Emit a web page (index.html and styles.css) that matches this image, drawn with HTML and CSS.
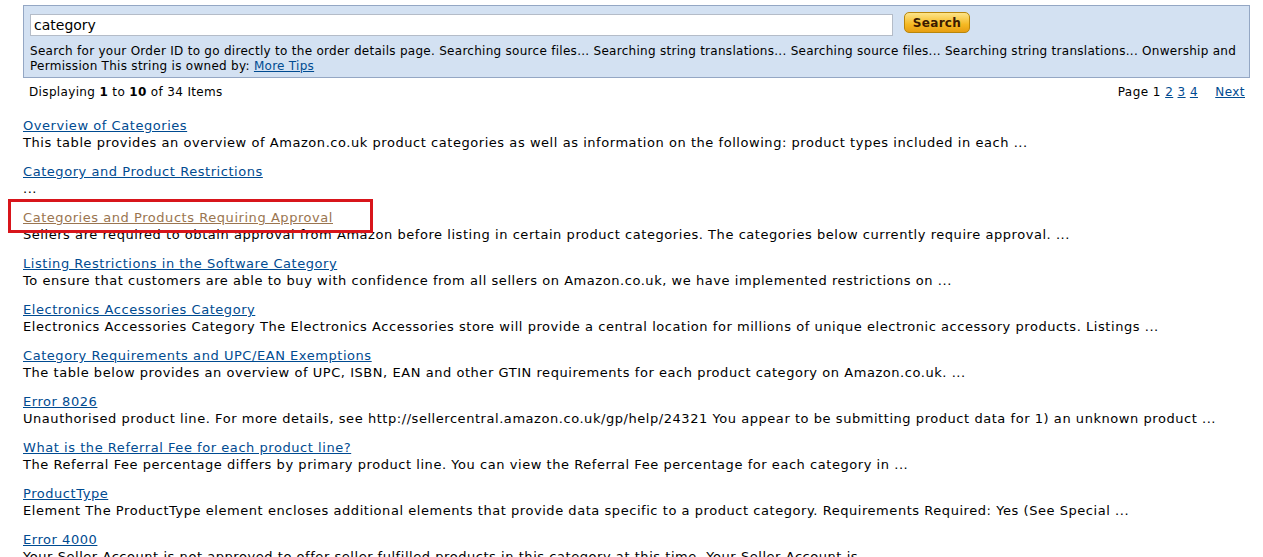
FILE: index.html
```html
<!DOCTYPE html>
<html lang="en">
<head>
<meta charset="UTF-8">
<title>Seller Help - Search Results</title>
<link rel="stylesheet" href="styles.css">
</head>
<body>
<div class="page">
    <div class="search-box">
        <form class="search-row">
            <input type="text" class="search-input" value="category">
            <button type="button" class="search-btn">Search</button>
        </form>
        <div class="search-tips">Search for your Order ID to go directly to the order details page. Searching source files... Searching string translations... Searching source files... Searching string translations... Onwership and Permission This string is owned by: <a href="#">More Tips</a></div>
    </div>

    <div class="result-bar">
        <span>Displaying <b>1</b> to <b>10</b> of 34 Items</span>
        <span class="pager">Page 1 <a href="#">2</a> <a href="#">3</a> <a href="#">4</a> <a href="#" class="next">Next</a></span>
    </div>

    <ul class="results">
        <li><a href="#">Overview of Categories</a><div>This table provides an overview of Amazon.co.uk product categories as well as information on the following: product types included in each ...</div></li>
        <li><a href="#">Category and Product Restrictions</a><div>...</div></li>
        <li class="marked"><a href="#" class="visited">Categories and Products Requiring Approval</a><div>Sellers are required to obtain approval from Amazon before listing in certain product categories. The categories below currently require approval. ...</div></li>
        <li><a href="#">Listing Restrictions in the Software Category</a><div>To ensure that customers are able to buy with confidence from all sellers on Amazon.co.uk, we have implemented restrictions on ...</div></li>
        <li><a href="#">Electronics Accessories Category</a><div>Electronics Accessories Category The Electronics Accessories store will provide a central location for millions of unique electronic accessory products. Listings ...</div></li>
        <li><a href="#">Category Requirements and UPC/EAN Exemptions</a><div>The table below provides an overview of UPC, ISBN, EAN and other GTIN requirements for each product category on Amazon.co.uk. ...</div></li>
        <li><a href="#">Error 8026</a><div>Unauthorised product line. For more details, see http://sellercentral.amazon.co.uk/gp/help/24321 You appear to be submitting product data for 1) an unknown product ...</div></li>
        <li><a href="#">What is the Referral Fee for each product line?</a><div>The Referral Fee percentage differs by primary product line. You can view the Referral Fee percentage for each category in ...</div></li>
        <li><a href="#">ProductType</a><div>Element The ProductType element encloses additional elements that provide data specific to a product category. Requirements Required: Yes (See Special ...</div></li>
        <li><a href="#">Error 4000</a><div>Your Seller Account is not approved to offer seller-fulfilled products in this category at this time. Your Seller Account is ...</div></li>
    </ul>
</div>
</body>
</html>
```

FILE: styles.css
```css
body {
    margin: 0;
    font-family: "DejaVu Sans", Verdana, sans-serif;
    font-size: 13px;
    letter-spacing: 0.55px;
    color: #000;
    background: #fff;
}
a {
    color: #004b91;
}
.page {
    padding: 5px 13px 0 23px;
}
.search-box {
    background-color: #d3e1f2;
    border: 1px solid #94a7c4;
    padding: 7px 4px 3px 6px;
}
.search-row {
    display: flex;
    align-items: flex-start;
    margin: 0;
}
.search-input {
    width: 863px;
    height: 22px;
    box-sizing: border-box;
    border: 1px solid #b4bcc8;
    padding: 0 3px;
    font-family: "DejaVu Sans", Verdana, sans-serif;
    font-size: 14px;
    margin-top: 1px;
}
.search-btn {
    margin-left: 11px;
    width: 66px;
    height: 21px;
    margin-top: -1px;
    border: 1px solid #b8860b;
    border-radius: 5px;
    background: linear-gradient(#fde489, #f5b923 60%, #e79e12);
    font-family: "DejaVu Sans", Verdana, sans-serif;
    font-size: 12px;
    font-weight: bold;
    letter-spacing: 0.3px;
    color: #3b1a00;
    padding: 0;
}
.search-tips {
    margin-top: 8px;
    font-size: 12px;
    line-height: 15px;
    letter-spacing: 0.28px;
}
.result-bar {
    display: flex;
    justify-content: space-between;
    padding: 6px 5px 0 6px;
    font-size: 12px;
    letter-spacing: 0.35px;
    line-height: 16px;
}
.pager {
    letter-spacing: 0.45px;
}
.pager .next {
    margin-left: 13px;
}
.results {
    list-style: none;
    margin: 17px 0 0;
    padding: 0;
}
.results li {
    line-height: 17px;
    margin-bottom: 12px;
}
.results a.visited {
    color: #9a7550;
}
.marked {
    position: relative;
}
.marked::after {
    content: "";
    position: absolute;
    left: -15px;
    top: -10px;
    width: 359px;
    height: 28px;
    border: 3px solid #d8151b;
}
```
